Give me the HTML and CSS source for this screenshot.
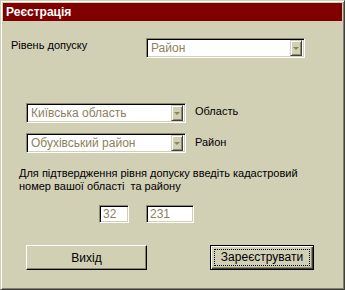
FILE: index.html
```html
<!DOCTYPE html>
<html lang="uk">
  <head>
    <meta charset="UTF-8" />
    <meta name="viewport" content="width=device-width, initial-scale=1.0" />
    <title>Реєстрація</title>
    <link rel="stylesheet" href="styles.css">
  </head>
  <body>
    <div class="window">
      <div class="title_bar">Реєстрація</div>

      <div class="row level_row">
        <span class="label">Рівень допуску</span>
        <div class="combo combo_level">
          <span class="combo_text">Район</span>
          <span class="combo_btn"><i></i></span>
        </div>
      </div>

      <div class="row region_row">
        <div class="combo combo_region">
          <span class="combo_text">Київська область</span>
          <span class="combo_btn"><i></i></span>
        </div>
        <span class="label">Область</span>
      </div>

      <div class="row district_row">
        <div class="combo combo_region">
          <span class="combo_text">Обухівський район</span>
          <span class="combo_btn"><i></i></span>
        </div>
        <span class="label">Район</span>
      </div>

      <p class="hint">Для підтвердження рівня допуску введіть кадастровий<br>номер вашої області &nbsp;та району</p>

      <div class="row code_row">
        <span class="edit edit_region">32</span>
        <span class="edit edit_district">231</span>
      </div>

      <div class="row button_row">
        <button class="btn btn_exit">Вихід</button>
        <button class="btn btn_default"><span class="focus">Зареєструвати</span></button>
      </div>
    </div>
  </body>
</html>
```

FILE: styles.css
```css
* {
  margin: 0;
  padding: 0;
  box-sizing: border-box;
}
body {
  background: #d1cfb4;
  font-family: "Liberation Sans", Arial, sans-serif;
  font-size: 11px;
  color: #000;
}
.window {
  width: 345px;
  height: 290px;
  background: #d1cfb4;
  border: 1px solid;
  border-color: #d1cfb4 #404040 #404040 #d1cfb4;
  padding: 1px;
  box-shadow: inset 1px 1px #fff, inset -1px -1px #808070;
}
.title_bar {
  height: 18px;
  margin: 1px 1px 0 1px;
  padding-left: 3px;
  background: #800000;
  color: #fff;
  font-weight: bold;
  font-size: 12px;
  line-height: 18px;
}
.row {
  display: flex;
}
.label {
  white-space: nowrap;
}
.level_row {
  margin-top: 17px;
  padding-left: 9px;
}
.level_row .label {
  width: 135px;
  padding-top: 1px;
}
.region_row {
  margin-top: 45px;
  padding-left: 24px;
}
.district_row {
  margin-top: 10px;
  padding-left: 24px;
}
.region_row .label {
  padding: 2px 0 0 9px;
}
.district_row .label {
  padding: 3px 0 0 9px;
}

/* комбобокс */
.combo {
  display: flex;
  height: 20px;
  border: 1px solid;
  border-color: #8d8a6e #fff #fff #8d8a6e;
  background: #fff;
  box-shadow: inset 1px 1px #000, inset -1px -1px #d1cfb4;
  padding: 2px 2px 2px 2px;
}
.combo_level {
  width: 159px;
}
.combo_region {
  width: 160px;
}
.combo_text {
  flex: 1;
  color: #8d8160;
  padding-left: 2px;
  line-height: 15px;
  font-size: 12px;
  white-space: nowrap;
  overflow: hidden;
}
.combo_btn {
  width: 12px;
  height: 16px;
  margin-top: -1px;
  background: #d1cfb4;
  border: 1px solid;
  border-color: #d1cfb4 #404040 #404040 #d1cfb4;
  box-shadow: inset 1px 1px #fff, inset -1px -1px #8d8a6e;
  display: flex;
  align-items: center;
  justify-content: center;
}
.combo_btn i {
  width: 0;
  height: 0;
  border-left: 3px solid transparent;
  border-right: 3px solid transparent;
  border-top: 3px solid #8d8160;
}

.hint {
  margin-top: 14px;
  padding-left: 17px;
  line-height: 13px;
  font-size: 11px;
}

/* поля вводу */
.code_row {
  margin-top: 12px;
  padding-left: 97px;
  gap: 17px;
}
.edit {
  height: 18px;
  border: 1px solid;
  border-color: #8d8a6e #fff #fff #8d8a6e;
  box-shadow: inset 1px 1px #000, inset -1px -1px #d1cfb4;
  background: #fff;
  color: #8d8160;
  padding: 2px 0 0 3px;
  line-height: 13px;
  font-size: 12px;
}
.edit_region {
  width: 30px;
}
.edit_district {
  width: 48px;
}

/* кнопки */
.button_row {
  margin-top: 22px;
  padding-left: 24px;
}
.btn {
  height: 25px;
  font-family: "Liberation Sans", Arial, sans-serif;
  font-size: 12px;
  color: #000;
  background: #d1cfb4;
  border: 1px solid;
  border-color: #fff #000 #000 #fff;
  box-shadow: inset -1px -1px #8d8a6e, inset 1px 1px #d1cfb4;
}
.btn_exit {
  width: 121px;
}
.btn_default {
  width: 104px;
  margin-left: 63px;
  border: 1px solid #000;
  box-shadow: inset 1px 1px #fff, inset -1px -1px #404040, inset -2px -2px #8d8a6e;
  padding: 3px;
}
.btn_default .focus {
  display: block;
  height: 100%;
  border: 1px dotted #000;
  line-height: 15px;
}
```
